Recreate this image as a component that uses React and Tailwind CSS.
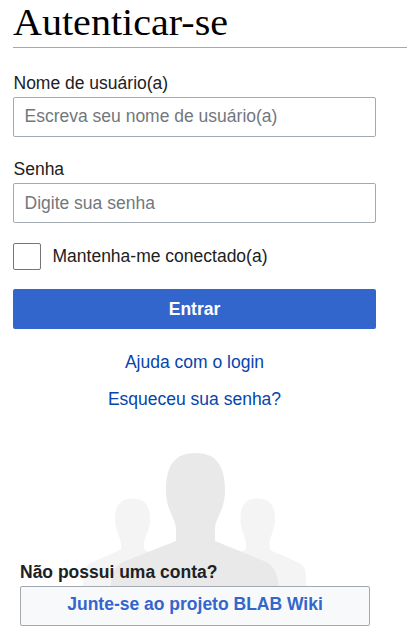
function Field({ id, label, placeholder, type = 'text', inset = 'pb-px' }) {
  return (
    <div className="flex flex-col">
      <label htmlFor={id} className="h-[25px] pl-[0.5px] text-[17.5px] leading-[22px]">
        {label}
      </label>
      <input
        id={id}
        type={type}
        placeholder={placeholder}
        className={`h-10 w-full rounded-xs border border-[#a2a9b1] bg-white pr-3 pl-[10.5px] text-[17.5px] text-[#202122] placeholder:text-[#72777d] ${inset}`}
      />
    </div>
  )
}

function People() {
  return (
    <svg className="absolute top-0 left-[80px]" width="230" height="136" viewBox="80 450 230 136" aria-hidden="true">
      <g fill="#f4f4f4">
        <path d="M83 586V577C83 568 87 564 95 561L118 551Q121 550 121 549V543C120 536 115 530 115 519C115 505 121 498.500 132.500 498.500S150 505 150 519C150 530 145 536 144 543V549Q144 550 147 551L171 561C179 564 182 568 182 577V586Z" />
        <path d="M208 586V577C208 568 212 564 220 561L243 551Q246 550 246 549V543C245 536 240.500 530 240.500 519C240.500 505 246 498.500 257.500 498.500S275 505 275 519C275 530 270 536 269.500 543V549Q269.500 550 272 551L295 561C303 564 306 568 306 577V586Z" />
      </g>
      <path fill="#e9e9e9" d="M111 586C111 575 114 566 124 561.500L176 541V528C175 517 166 510 166 490C166 464 176 453 195.500 453S225 464 225 490C225 510 216 517 215 528V541L265 561.500C274 565 278 575 278.500 586Z" />
    </svg>
  )
}

export default function App() {
  return (
    <main className="h-[643px] w-[407px] overflow-hidden bg-white pl-[13px] font-['Liberation_Sans',Arial,sans-serif] text-[#202122]">
      <h1 className="h-12 border-b border-[#a2a9b1] pt-px font-[Georgia,'Liberation_Serif',serif] text-[37px] leading-[44px] text-black">
        <span className="inline-block origin-left scale-x-[1.083]">Autenticar-se</span>
      </h1>
      <form className="flex w-[363px] flex-col pt-6" onSubmit={(e) => e.preventDefault()}>
        <Field id="user" label="Nome de usuário(a)" placeholder="Escreva seu nome de usuário(a)" />
        <div className="h-[21px]" />
        <Field id="password" label="Senha" placeholder="Digite sua senha" type="password" inset="pt-px" />
        <label className="mt-5 flex h-[27px] items-center gap-[11.5px] text-[17.5px]">
          <input type="checkbox" className="h-[27px] w-7 appearance-none rounded-xs border border-[#72777d] bg-white" />
          <span>Mantenha-me conectado(a)</span>
        </label>
        <button className="mt-[19px] h-10 rounded-xs bg-[#3366cc] text-[17.5px] font-bold text-white">Entrar</button>
        <div className="flex flex-col items-center gap-[15px] pt-[22px] text-[17.5px] leading-[22px] text-[#0645ad]">
          <a href="#ajuda">Ajuda com o login</a>
          <a href="#senha">Esqueceu sua senha?</a>
        </div>
      </form>
      <section className="relative -ml-[13px] mt-10 h-[176px] pt-[111px] pl-5">
        <People />
        <h2 className="relative h-[25px] text-[17.5px] leading-[22px] font-bold">Não possui uma conta?</h2>
        <a
          href="#criar"
          className="relative flex h-10 w-[350px] justify-center rounded-xs border border-[#a2a9b1] bg-[#f8f9fa] pt-[6px] text-[17.5px] leading-[22px] font-bold text-[#3366cc]"
        >
          Junte-se ao projeto BLAB Wiki
        </a>
      </section>
    </main>
  )
}
